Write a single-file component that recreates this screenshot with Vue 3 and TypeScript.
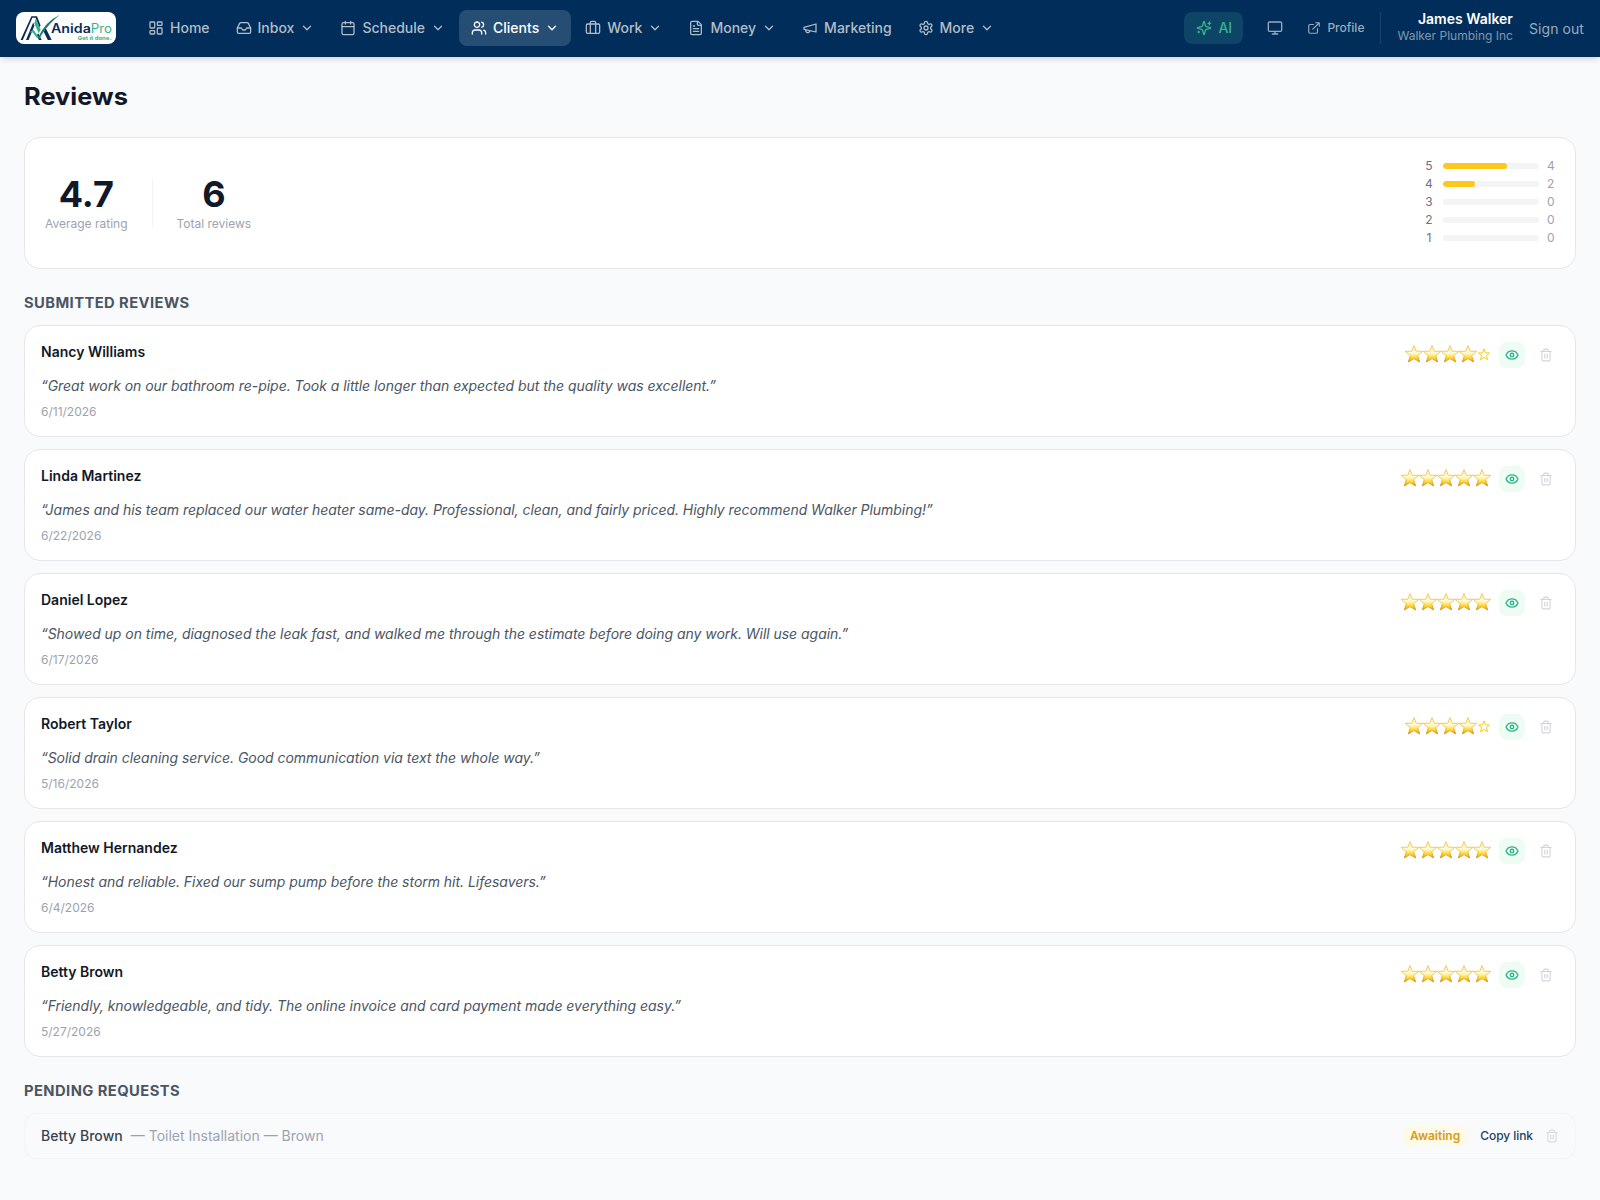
<script setup lang="ts">
interface NavItem { label: string; icon: string; menu: boolean; active?: boolean }
interface Review { name: string; text: string; date: string; rating: number }

const icons: Record<string, string> = {
  home: '<rect width="7" height="9" x="3" y="3" rx="1"/><rect width="7" height="5" x="14" y="3" rx="1"/><rect width="7" height="9" x="14" y="12" rx="1"/><rect width="7" height="5" x="3" y="16" rx="1"/>',
  inbox: '<path d="M22 12h-6l-2 3h-4l-2-3H2"/><path d="M5.45 5.11 2 12v6a2 2 0 0 0 2 2h16a2 2 0 0 0 2-2v-6l-3.45-6.89A2 2 0 0 0 16.76 4H7.24a2 2 0 0 0-1.79 1.11z"/>',
  calendar: '<path d="M8 2v4M16 2v4"/><rect width="18" height="18" x="3" y="4" rx="2"/><path d="M3 10h18"/>',
  users: '<path d="M16 21v-2a4 4 0 0 0-4-4H6a4 4 0 0 0-4 4v2"/><circle cx="9" cy="7" r="4"/><path d="M22 21v-2a4 4 0 0 0-3-3.87M16 3.13a4 4 0 0 1 0 7.75"/>',
  briefcase: '<path d="M16 20V4a2 2 0 0 0-2-2h-4a2 2 0 0 0-2 2v16"/><rect width="20" height="14" x="2" y="6" rx="2"/>',
  file: '<path d="M15 2H6a2 2 0 0 0-2 2v16a2 2 0 0 0 2 2h12a2 2 0 0 0 2-2V7Z"/><path d="M14 2v4a2 2 0 0 0 2 2h4M10 9H8M16 13H8M16 17H8"/>',
  megaphone: '<path d="m3 11 18-5v12L3 14v-3z"/><path d="M11.6 16.8a3 3 0 1 1-5.8-1.6"/>',
  settings: '<path d="M12.22 2h-.44a2 2 0 0 0-2 2v.18a2 2 0 0 1-1 1.73l-.43.25a2 2 0 0 1-2 0l-.15-.08a2 2 0 0 0-2.73.73l-.22.38a2 2 0 0 0 .73 2.73l.15.1a2 2 0 0 1 1 1.72v.51a2 2 0 0 1-1 1.74l-.15.09a2 2 0 0 0-.73 2.73l.22.38a2 2 0 0 0 2.73.73l.15-.08a2 2 0 0 1 2 0l.43.25a2 2 0 0 1 1 1.73V20a2 2 0 0 0 2 2h.44a2 2 0 0 0 2-2v-.18a2 2 0 0 1 1-1.73l.43-.25a2 2 0 0 1 2 0l.15.08a2 2 0 0 0 2.73-.73l.22-.39a2 2 0 0 0-.73-2.73l-.15-.08a2 2 0 0 1-1-1.74v-.5a2 2 0 0 1 1-1.74l.15-.09a2 2 0 0 0 .73-2.73l-.22-.38a2 2 0 0 0-2.73-.73l-.15.08a2 2 0 0 1-2 0l-.43-.25a2 2 0 0 1-1-1.73V4a2 2 0 0 0-2-2z"/><circle cx="12" cy="12" r="3"/>',
  chevron: '<path d="m6 9 6 6 6-6"/>',
  sparkles: '<path d="M9.937 15.5A2 2 0 0 0 8.5 14.063l-6.135-1.582a.5.5 0 0 1 0-.962L8.5 9.936A2 2 0 0 0 9.937 8.5l1.582-6.135a.5.5 0 0 1 .963 0L14.063 8.5A2 2 0 0 0 15.5 9.937l6.135 1.581a.5.5 0 0 1 0 .964L15.5 14.063a2 2 0 0 0-1.437 1.437l-1.582 6.135a.5.5 0 0 1-.963 0z"/><path d="M20 3v4M22 5h-4M4 17v2M5 18H3"/>',
  monitor: '<rect width="20" height="14" x="2" y="3" rx="2"/><path d="M8 21h8M12 17v4"/>',
  external: '<path d="M15 3h6v6M10 14 21 3M18 13v6a2 2 0 0 1-2 2H5a2 2 0 0 1-2-2V8a2 2 0 0 1 2-2h6"/>',
  eye: '<path d="M2.062 12.348a1 1 0 0 1 0-.696 10.75 10.75 0 0 1 19.876 0 1 1 0 0 1 0 .696 10.75 10.75 0 0 1-19.876 0"/><circle cx="12" cy="12" r="3"/>',
  trash: '<path d="M3 6h18M19 6v14c0 1-1 2-2 2H7c-1 0-2-1-2-2V6M8 6V4c0-1 1-2 2-2h4c1 0 2 1 2 2v2M10 11v6M14 11v6"/>',
}

const nav: NavItem[] = [
  { label: 'Home', icon: 'home', menu: false },
  { label: 'Inbox', icon: 'inbox', menu: true },
  { label: 'Schedule', icon: 'calendar', menu: true },
  { label: 'Clients', icon: 'users', menu: true, active: true },
  { label: 'Work', icon: 'briefcase', menu: true },
  { label: 'Money', icon: 'file', menu: true },
  { label: 'Marketing', icon: 'megaphone', menu: false },
  { label: 'More', icon: 'settings', menu: true },
]

const distribution = [
  { stars: 5, count: 4 },
  { stars: 4, count: 2 },
  { stars: 3, count: 0 },
  { stars: 2, count: 0 },
  { stars: 1, count: 0 },
]

const reviews: Review[] = [
  { name: 'Nancy Williams', text: 'Great work on our bathroom re-pipe. Took a little longer than expected but the quality was excellent.', date: '6/11/2026', rating: 4 },
  { name: 'Linda Martinez', text: 'James and his team replaced our water heater same-day. Professional, clean, and fairly priced. Highly recommend Walker Plumbing!', date: '6/22/2026', rating: 5 },
  { name: 'Daniel Lopez', text: 'Showed up on time, diagnosed the leak fast, and walked me through the estimate before doing any work. Will use again.', date: '6/17/2026', rating: 5 },
  { name: 'Robert Taylor', text: 'Solid drain cleaning service. Good communication via text the whole way.', date: '5/16/2026', rating: 4 },
  { name: 'Matthew Hernandez', text: 'Honest and reliable. Fixed our sump pump before the storm hit. Lifesavers.', date: '6/4/2026', rating: 5 },
  { name: 'Betty Brown', text: 'Friendly, knowledgeable, and tidy. The online invoice and card payment made everything easy.', date: '5/27/2026', rating: 5 },
]
</script>

<template>
  <div class="page">
    <svg width="0" height="0" class="defs">
      <defs>
        <linearGradient id="gold" x1="0" y1="0" x2="0" y2="1">
          <stop offset="0" stop-color="#fff3b8" />
          <stop offset=".45" stop-color="#fffbdc" />
          <stop offset=".62" stop-color="#ffe873" />
          <stop offset=".82" stop-color="#fbcb1c" />
          <stop offset="1" stop-color="#d98f0c" />
        </linearGradient>
        <linearGradient id="goldEdge" x1="0" y1="0" x2="0" y2="1">
          <stop offset="0" stop-color="#ecc45c" />
          <stop offset=".5" stop-color="#efc64e" />
          <stop offset="1" stop-color="#d8920f" />
        </linearGradient>
      </defs>
    </svg>
    <header class="topbar">
      <div class="logo">
        <svg width="100" height="32" viewBox="0 0 100 32">
          <path d="M4.6 28 15.4 4.2H21L24.6 13.4 23.4 15.2 19.6 5.8H16.4L6.8 28Z" fill="#0b2c57" />
          <path d="M10 28 17.2 10.6 18.4 13.8 12.6 28Z" fill="#0b2c57" />
          <path d="M20.6 23.2 22.4 21.6 25.6 28H22.9Z" fill="#0b2c57" />
          <path d="M27.6 19.4 29.6 15.8 35.6 28H31.8Z" fill="#0b2c57" />
          <path d="M19.6 6.4 24.6 17.6 22.8 21.6 18.4 11.6Z" fill="#35b58d" />
          <path d="M13.2 20.2 17.4 17.8 22.6 24.8 21 26.2 16.8 20.4Z" fill="#35b58d" />
          <path d="M22 25.6Q29.4 9.4 44 2.8Q33 11.2 25 23.8L23.4 27.4Z" fill="#217a72" />
          <text x="35" y="21.3" class="word" font-size="12.8" font-weight="600" fill="#0b2c57" textLength="39.8" lengthAdjust="spacingAndGlyphs">Anida</text>
          <text x="74.8" y="21.3" class="word" font-size="12.8" font-weight="400" fill="#35b58d" textLength="21.2" lengthAdjust="spacingAndGlyphs">Pro</text>
          <text x="61.8" y="28" class="word" font-size="5.4" font-weight="700" fill="#35b58d" textLength="33.6" lengthAdjust="spacingAndGlyphs">Get it done.</text>
        </svg>
      </div>
      <nav class="nav">
        <a v-for="n in nav" :key="n.label" class="nav-item" :class="{ active: n.active }">
          <svg class="icon i16" viewBox="0 0 24 24" v-html="icons[n.icon]" />
          <span>{{ n.label }}</span>
          <svg v-if="n.menu" class="icon i14 chevron" viewBox="0 0 24 24" v-html="icons.chevron" />
        </a>
      </nav>
      <div class="tools">
        <a class="ai"><svg class="icon i16" viewBox="0 0 24 24" v-html="icons.sparkles" /><span>AI</span></a>
        <a class="monitor"><svg class="icon i16" viewBox="0 0 24 24" v-html="icons.monitor" /></a>
        <a class="profile"><svg class="icon i14" viewBox="0 0 24 24" v-html="icons.external" /><span>Profile</span></a>
        <div class="account">
          <div class="user">James Walker</div>
          <div class="company">Walker Plumbing Inc</div>
        </div>
        <a class="signout">Sign out</a>
      </div>
    </header>

    <main class="main">
      <h1><span>Reviews</span></h1>

      <section class="card summary">
        <div class="stat"><div class="big">4.7</div><div class="caption">Average rating</div></div>
        <div class="divider"></div>
        <div class="stat"><div class="big">6</div><div class="caption">Total reviews</div></div>
        <div class="bars">
          <div v-for="d in distribution" :key="d.stars" class="bar-row">
            <span class="bar-label">{{ d.stars }}</span>
            <div class="track"><div class="fill" :style="{ width: (d.count / 6) * 100 + '%' }"></div></div>
            <span class="bar-count">{{ d.count }}</span>
          </div>
        </div>
      </section>

      <h2><span>SUBMITTED REVIEWS</span></h2>
      <div class="list">
        <article v-for="r in reviews" :key="r.name" class="card review">
          <div class="review-head">
            <div class="name">{{ r.name }}</div>
            <div class="actions">
              <div class="stars">
                <svg v-for="s in r.rating" :key="s" class="star" width="18" height="18" viewBox="0 0 18 18">
                  <path d="M9 .6 11.2 6.2 17.8 6.3 12.7 10.6 14.6 16.9 9 13.5 3.4 16.9 5.3 10.6.2 6.3 6.8 6.2Z" fill="url(#gold)" stroke="url(#goldEdge)" stroke-width=".9" stroke-linejoin="round" />
                </svg>
                <svg v-if="r.rating < 5" class="star-off" width="14" height="18" viewBox="0 0 14 18">
                  <path d="M7 3.9 8.5 7.9 12.5 8 9.4 10.6 10.5 14.7 7 12.4 3.5 14.7 4.6 10.6 1.5 8 5.5 7.9Z" fill="none" stroke="#facc15" stroke-width="1" />
                </svg>
              </div>
              <button class="btn eye"><svg class="icon i14" viewBox="0 0 24 24" v-html="icons.eye" /></button>
              <button class="btn trash"><svg class="icon i14" viewBox="0 0 24 24" v-html="icons.trash" /></button>
            </div>
          </div>
          <p class="quote">“{{ r.text }}”</p>
          <div class="date">{{ r.date }}</div>
        </article>
      </div>

      <h2><span>PENDING REQUESTS</span></h2>
      <div class="pending">
        <span class="pending-name">Betty Brown</span>
        <span class="pending-job">— Toilet Installation — Brown</span>
        <span class="badge">Awaiting</span>
        <a class="copy">Copy link</a>
        <svg class="icon i14 pending-trash" viewBox="0 0 24 24" v-html="icons.trash" />
      </div>
    </main>
  </div>
</template>

<style>
body { margin: 0; background: #f9fafc; }
</style>

<style scoped>
* { box-sizing: border-box; }
.page { min-height: 1200px; background: #f9fafc; font-family: Inter, "Liberation Sans", sans-serif; font-size: 14px; line-height: 20px; color: #111827; }
.defs { position: absolute; }
.icon { fill: none; stroke: currentColor; stroke-width: 2; stroke-linecap: round; stroke-linejoin: round; flex: none; display: block; }
.i16 { width: 16px; height: 16px; }
.i14 { width: 14px; height: 14px; }
.topbar { height: 57px; background: #002d5a; display: flex; align-items: center; padding: 0 16px 1px; box-shadow: 0 4px 6px -1px rgba(0,0,0,.1), 0 2px 4px -2px rgba(0,0,0,.1); }
.logo { width: 100px; height: 32px; background: #fff; border-radius: 8px; overflow: hidden; flex: none; }
.logo svg { display: block; }
.word { font-family: Inter, sans-serif; }
.nav { display: flex; gap: 2px; margin-left: 20px; }
.nav-item { display: flex; align-items: center; gap: 6px; height: 36px; padding: 0 12px; border-radius: 8px; color: #b4bdc7; font-weight: 500; }
.nav-item.active { background: #264d73; color: #fff; }
.nav-item .icon { stroke-width: 1.9; }
.nav-item .chevron { stroke-width: 2.2; }
.tools { margin-left: auto; display: flex; align-items: center; color: #9cabbb; }
.ai { display: flex; align-items: center; gap: 6px; width: 59px; height: 32px; padding-left: 12px; border-radius: 8px; background: #0e4465; color: #35b58d; font-weight: 500; }
.monitor { margin-left: 24px; }
.profile { display: flex; align-items: center; gap: 6px; margin-left: 24px; font-size: 12px; font-weight: 500; }
.account { margin-left: 16px; border-left: 1px solid #1a426b; height: 32px; padding-left: 16px; text-align: right; }
.user { color: #fff; font-weight: 600; line-height: 17.5px; margin-top: -2px; }
.company { font-size: 12px; line-height: 15px; color: rgba(255,255,255,.5); }
.signout { margin-left: 16px; padding-top: 2px; letter-spacing: .08px; }
.main { padding: 24px; }
h1, h2, p { margin: 0; }
h1 { font-size: 24px; line-height: 32px; font-weight: 700; color: #111827; }
h1 span, h2 span { display: inline-block; transform-origin: left center; }
h1 span { transform: scaleX(1.06); }
h2 span { transform: scaleX(1.053); }
.card { background: #fff; border: 1px solid #e5e7eb; border-radius: 16px; }
.summary { margin-top: 24px; height: 132px; padding: 20px; display: flex; align-items: center; gap: 24px; }
.stat { text-align: center; }
.big { font-size: 36px; line-height: 40px; font-weight: 700; }
.caption { font-size: 12px; line-height: 16px; color: #9ca3af; margin-top: 2px; }
.divider { width: 1px; height: 48px; background: #f3f4f6; }
.bars { margin-left: auto; align-self: flex-start; display: flex; flex-direction: column; gap: 2px; }
.bar-row { display: flex; align-items: center; height: 16px; font-size: 12px; }
.bar-label { width: 8px; text-align: center; color: #6b7280; margin-right: 10px; }
.track { width: 96px; height: 6px; border-radius: 3px; background: #f3f4f6; overflow: hidden; }
.fill { height: 6px; border-radius: 3px; background: #fbc81b; }
.bar-count { width: 8px; margin-left: 8px; color: #9ca3af; }
h2 { font-size: 14px; line-height: 20px; font-weight: 700; color: #4b5563; margin: 24px 0 12px; letter-spacing: .4px; }
.list { display: flex; flex-direction: column; gap: 12px; }
.review { height: 112px; padding: 16px; }
.review-head { display: flex; height: 26px; justify-content: space-between; }
.name { font-weight: 600; }
.actions { display: flex; align-items: center; gap: 8px; }
.stars { display: flex; align-items: center; padding-bottom: 2px; }
.star, .star-off { display: block; }
.btn { width: 26px; height: 26px; border: 0; border-radius: 8px; padding: 6px; background: none; }
.eye { background: #effcf4; color: #2fb38b; }
.eye .icon { stroke-width: 2.4; }
.trash { color: #d1d5db; }
.quote { margin-top: 8px; font-style: italic; color: #4b5563; letter-spacing: -.035px; }
.date { margin-top: 8px; font-size: 12px; line-height: 16px; color: #9ca3af; }
.pending { display: flex; align-items: center; height: 46px; padding: 0 16px; border: 1px solid #f3f4f6; border-radius: 12px; }
.pending-name { font-weight: 500; color: #374151; letter-spacing: .05px; }
.pending-job { margin-left: 8px; color: #9ca3af; }
.badge { margin-left: auto; height: 20px; padding: 0 8px; border-radius: 10px; background: #fefae5; color: #dd9a14; font-size: 12px; font-weight: 600; }
.copy { margin-left: 12px; font-size: 12px; font-weight: 500; color: #1d4168; letter-spacing: -.06px; }
.pending-trash { margin-left: 12px; color: #d9dce1; }
</style>
